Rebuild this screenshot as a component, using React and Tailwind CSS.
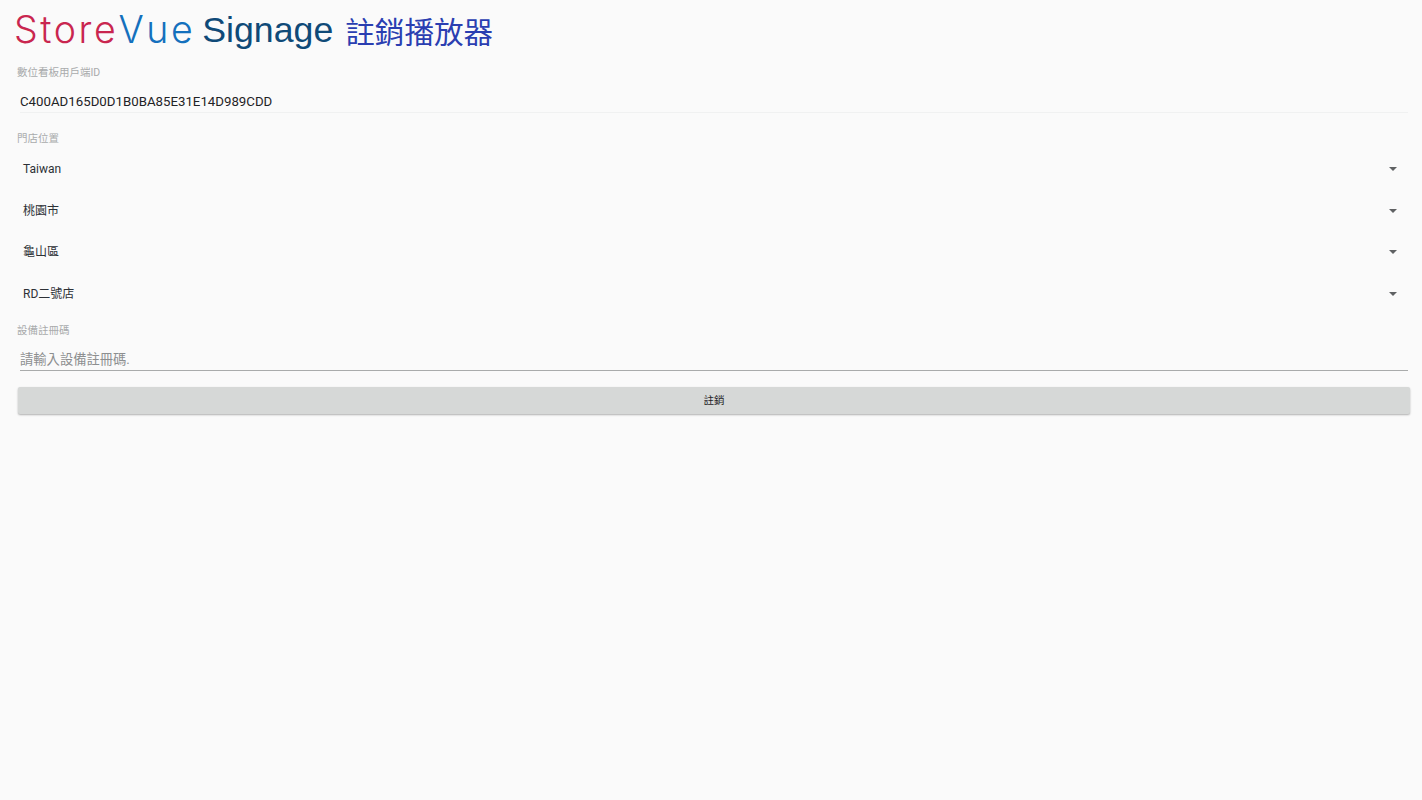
const cjk = '"Noto Sans CJK TC", sans-serif';

function Caret() {
  return (
    <svg width="8" height="4" viewBox="0 0 8 4" className="shrink-0">
      <path d="M0 0h8L4 4z" fill="#5f6163" />
    </svg>
  );
}

function SelectRow({ text }) {
  return (
    <div className="flex h-[41.6px] items-center justify-between pl-[23px] pr-[25px] text-[12px] text-[#2d3136]">
      <span>{text}</span>
      <Caret />
    </div>
  );
}

function Label({ children, className = "" }) {
  return <div className={`h-[14px] pl-[17px] text-[10.5px] leading-[14px] text-[#a9abac] ${className}`}>{children}</div>;
}

export default function App() {
  const logo = { fontFamily: `Inter, sans-serif`, fontWeight: 300 };
  return (
    <div
      className="min-h-[800px] bg-[#fafafa]"
      style={{ fontFamily: `Roboto, ${cjk}` }}
    >
      <header className="flex h-[66px] items-start pl-[14px] pt-[11px]">
        <span className="text-[37.5px] leading-none tracking-[2.6px] text-[#c9264f]" style={logo}>Store</span>
        <span className="text-[37.5px] leading-none tracking-[2.6px] text-[#1470bd]" style={logo}>Vue</span>
        <span className="ml-[7px] mt-[1.5px] text-[35.7px] leading-none text-[#0f4a78]" style={{ fontFamily: `"Liberation Sans", sans-serif` }}>Signage</span>
        <h1 className="ml-[12px] mt-[7px] text-[29.6px] font-normal leading-none text-[#2a3eb1]" style={{ fontFamily: `"Liberation Sans", ${cjk}` }}>註銷播放器</h1>
      </header>

      <Label>數位看板用戶端ID</Label>
      <div className="ml-[20px] mr-[14px] mt-[10px] flex h-[23px] items-center border-b border-[#f0f1f1] pt-[1px] text-[13.25px] text-[#1f2326]">
        C400AD165D0D1B0BA85E31E14D989CDD
      </div>

      <Label className="mt-[19px]">門店位置</Label>
      <div className="mt-[2.5px]">
        <SelectRow text="Taiwan" />
        <SelectRow text="桃園市" />
        <SelectRow text="龜山區" />
        <SelectRow text="RD二號店" />
      </div>

      <Label className="mt-[9.5px]">設備註冊碼</Label>
      <div className="ml-[20px] mr-[14px] mt-[8px] flex h-[24.6px] items-center border-b border-[#a9abab] pt-[3px] text-[13.3px] text-[#8d8f90]">
        請輸入設備註冊碼.
      </div>

      <div className="ml-[18px] mr-[12px] mt-[16px]">
        <button className="flex h-[27px] w-full items-center justify-center rounded-[2px] bg-[#d6d8d7] text-[10.5px] text-[#1f2326] shadow-[0_1px_2px_rgba(0,0,0,0.3)]">
          註銷
        </button>
      </div>
    </div>
  );
}
